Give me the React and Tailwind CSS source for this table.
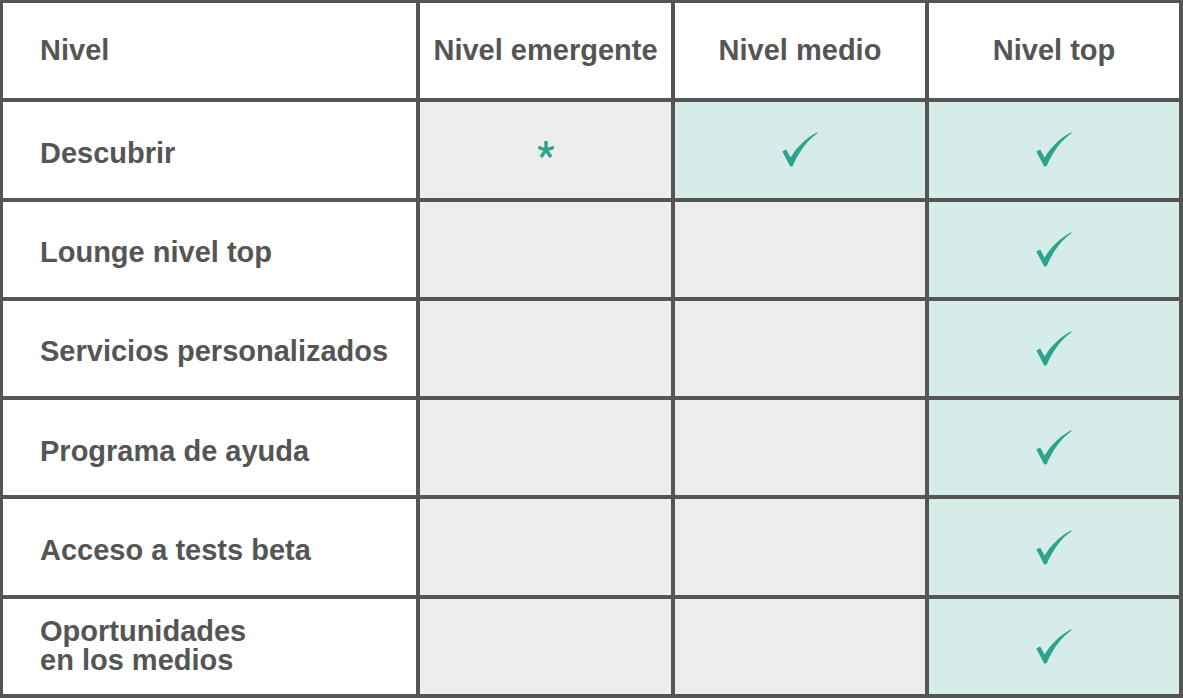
import React from "react";

const Check = () => (
  <svg width="36" height="35" viewBox="0 0 36 35" aria-hidden="true">
    <path
      d="M0.3 19.6 L4.2 17.6 L8.6 25.6 C14.5 15.5 23 6.8 35.2 0.2 L35.7 1.1 C25.5 8.5 17.5 18.6 10.6 34.2 L8.2 34.4 Z"
      fill="#2ca38c"
    />
  </svg>
);

const Asterisk = () => (
  <svg width="16" height="17" viewBox="-8 -8.5 16 17" aria-hidden="true">
    <g stroke="#2ca38c" strokeWidth="3.4" strokeLinecap="butt">
      <line x1="0" y1="0.5" x2="0" y2="-8.5" />
      <line x1="0" y1="0.5" x2="-7.8" y2="-2.2" />
      <line x1="0" y1="0.5" x2="7.8" y2="-2.2" />
      <line x1="0" y1="0.5" x2="-5" y2="7.6" />
      <line x1="0" y1="0.5" x2="5" y2="7.6" />
    </g>
  </svg>
);

const rows = [
  { label: ["Descubrir"], em: "star", mid: true },
  { label: ["Lounge nivel top"] },
  { label: ["Servicios personalizados"] },
  { label: ["Programa de ayuda"] },
  { label: ["Acceso a tests beta"] },
  { label: ["Oportunidades", "en los medios"] },
];

export default function App() {
  return (
    <div
      className="w-[1183px] h-[698px] bg-[#555555] grid grid-cols-[413px_251px_250px_250px] grid-rows-7 gap-[4px] pt-[3px] pl-[3px] pr-[4px] pb-[4px] text-[#555555] text-[29px] font-bold"
      style={{ fontFamily: '"Liberation Sans", Arial, sans-serif' }}
    >
      <div className="bg-white flex items-center pl-[37px]">Nivel</div>
      <div className="bg-white flex items-center justify-center">Nivel emergente</div>
      <div className="bg-white flex items-center justify-center">Nivel medio</div>
      <div className="bg-white flex items-center justify-center">Nivel top</div>
      {rows.map((r, i) => (
        <React.Fragment key={i}>
          <div
            className={
              (r.label.length > 1 ? "pt-[0px] leading-[29px]" : "pt-[6px] leading-[30px]") +
              " bg-white flex flex-col justify-center pl-[37px]"
            }
          >
            {r.label.map((l, j) => (
              <span key={j}>{l}</span>
            ))}
          </div>
          <div className="bg-[#ededed] flex items-center justify-center">
            {r.em === "star" ? <Asterisk /> : null}
          </div>
          <div className={(r.mid ? "bg-[#d6ece8]" : "bg-[#ededed]") + " flex items-center justify-center"}>
            {r.mid ? <Check /> : null}
          </div>
          <div className="bg-[#d6ece8] flex items-center justify-center">
            <Check />
          </div>
        </React.Fragment>
      ))}
    </div>
  );
}
